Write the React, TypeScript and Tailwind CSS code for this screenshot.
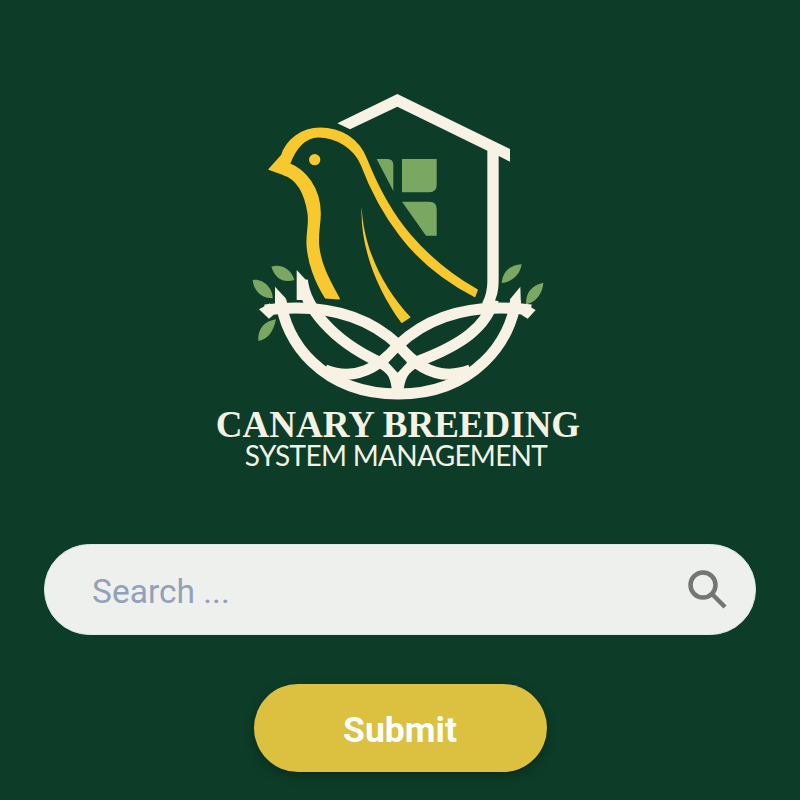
import { ReactElement } from "react";

function Logo(): ReactElement {
  return (
    <svg viewBox="0 0 960 960" className="w-[320px] h-[320px] block shrink-0">
      {/* house */}
      <path
        fill="#f7f2e3"
        d="M292 115 L472 27 L810 192 L810 230 L776 213 V590 Q776 630 758 660 L726 655 Q742 625 742 590 V197 L472 65 L330 133 Z"
      />
      {/* windows */}
      <g fill="#7aa862">
        <path d="M410 222 H443 Q460 222 460 240 V318 Z" />
        <path d="M486 222 H590 V300 Q590 322 568 322 H486 Z" />
        <path d="M486 350 H568 Q590 350 590 372 V452 H558 Z" />
      </g>
      {/* leaves */}
      <g fill="#7aa862">
        <path d="M94 545 C125 535 155 555 163 585 C130 595 105 580 94 545 Z" />
        <path d="M38 585 C70 580 98 610 98 640 C65 640 42 620 38 585 Z" />
        <path d="M108 703 C100 740 85 762 55 768 C52 730 75 708 108 703 Z" />
        <path d="M845 538 C840 570 815 592 785 594 C788 560 810 540 845 538 Z" />
        <path d="M910 593 C908 625 888 652 858 658 C856 625 875 600 910 593 Z" />
      </g>
      {/* bird */}
      <g fill="#f8c92f">
        <path
          stroke="#f8c92f"
          strokeWidth="5"
          strokeLinejoin="round"
          d="M88 253 L125 212 C140 165 185 130 240 130 C300 130 355 160 380 225 C410 300 450 380 510 450 C570 520 640 575 711 615 L704 634 C620 590 540 530 480 450 C430 385 395 320 365 240 C345 190 290 155 235 155 C195 155 165 190 148 237 C195 255 240 310 240 385 C240 420 232 440 235 480 C240 540 270 590 297 641 L257 638 C225 590 205 530 202 480 C200 440 210 420 205 385 C195 320 170 280 130 268 Z"
        />
        <circle cx="224" cy="224" r="17" />
        <path d="M365 365 C360 470 400 600 485 715 L512 697 C430 610 370 490 365 365 Z" />
      </g>
      {/* nest */}
      <g transform="translate(15 555)">
        <g fill="none" stroke="#f7f2e3" strokeWidth="33">
          <path d="M108 90 C118 210 230 372 460 372 C688 372 800 210 812 90" />
          <path d="M60 120 C220 100 360 130 460 225 C400 295 330 335 240 300" />
          <path d="M858 120 C700 100 560 130 460 225 C516 295 586 335 676 300" />
          <path d="M172 30 C180 110 260 210 400 275 C445 295 455 320 458 372" />
          <path d="M745 90 C725 170 650 225 516 275 C475 295 462 320 458 372" />
        </g>
        <g fill="#f7f2e3">
          <path d="M42 118 L75 100 L85 135 L72 146 Z" />
          <path d="M872 120 L840 102 L830 135 L848 146 Z" />
          <path d="M90 50 L122 85 V110 L90 110 Z" />
          <path d="M826 50 L795 88 V110 L828 110 Z" />
          <path d="M155 0 L188 35 L198 90 L155 90 Z" />
        </g>
        <path d="M458 248 L486 278 L458 308 L430 278 Z" fill="#0d3d29" />
      </g>
    </svg>
  );
}

export default function App() {
  return (
    <div className="w-[800px] h-[800px] overflow-hidden bg-[#0d3d29] flex flex-col items-center pt-[85px] font-['Roboto',sans-serif]">
      <Logo />
      <div className="mt-[3px] -ml-[4px] text-[#f5f2e4] font-['Liberation_Serif',serif] font-bold text-[37px] leading-[34px] whitespace-nowrap">
        CANARY BREEDING
      </div>
      <div className="-ml-[8px] text-[#f5f2e4] font-['Lato',sans-serif] font-normal text-[28px] tracking-[-0.7px] leading-[26px] whitespace-nowrap">
        SYSTEM MANAGEMENT
      </div>
      <div className="mt-[76px] w-[712px] h-[91px] shrink-0 rounded-full bg-[#eef0ee] border border-[#dcebe8] flex items-center justify-between pl-[47px] pr-[27px]">
        <span className="text-[#94a0b8] text-[33.5px] leading-none pt-[5px]">Search ...</span>
        <svg viewBox="0 0 40 40" className="w-[40px] h-[40px]" fill="none" stroke="#757575" strokeWidth="4.5">
          <circle cx="15" cy="15" r="12.5" />
          <path d="M24 24 L37 37" />
        </svg>
      </div>
      <button className="mt-[49px] pt-[5px] w-[293px] h-[88px] shrink-0 rounded-full bg-[#dcc040] text-white font-bold text-[35.5px] shadow-[0_4px_12px_rgba(0,0,0,0.3)]">
        Submit
      </button>
    </div>
  );
}
